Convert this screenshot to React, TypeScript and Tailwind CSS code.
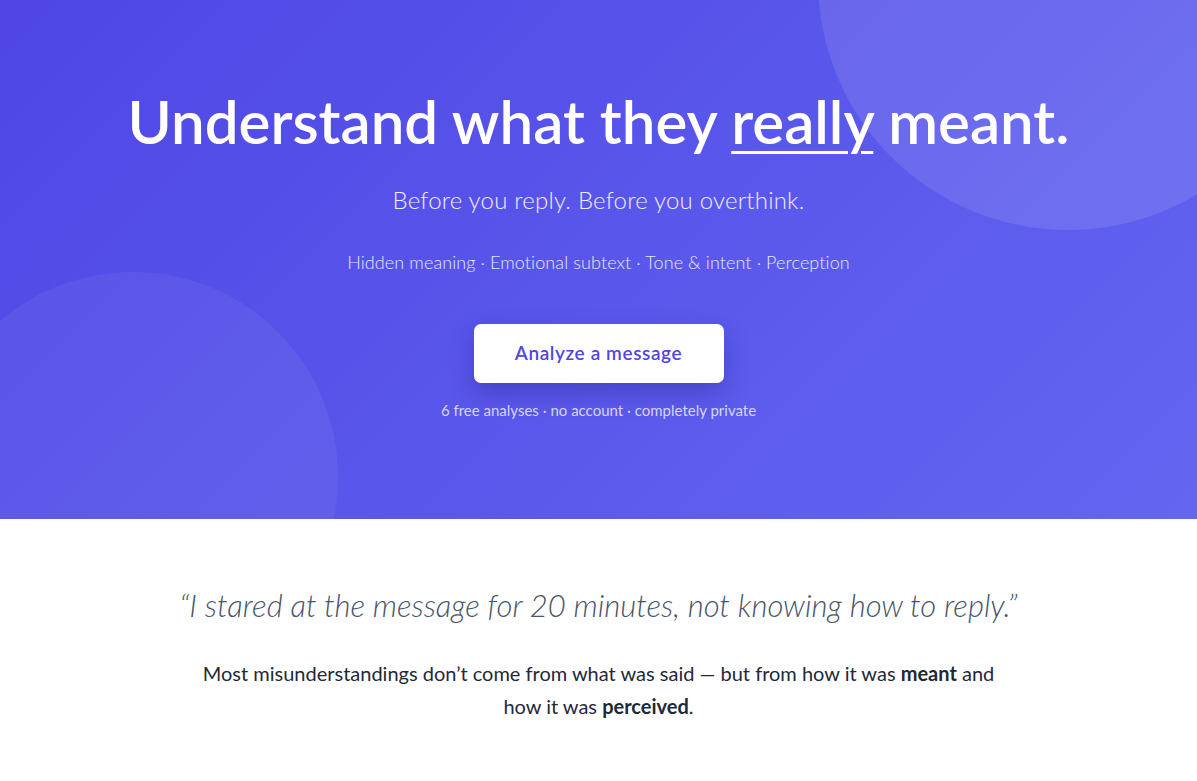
import React from "react";

export default function App() {
  return (
    <div className="min-h-screen bg-white" style={{ fontFamily: '"Lato", "Open Sans", sans-serif' }}>
      <section className="relative h-[519px] overflow-hidden bg-[linear-gradient(135deg,#4f46e5_0%,#6366f1_100%)] text-white">
        <div className="pointer-events-none absolute left-[818px] top-[-270px] h-[500px] w-[500px] rounded-full bg-white/10" />
        <div className="pointer-events-none absolute left-[-72px] top-[272px] h-[410px] w-[410px] rounded-full bg-white/5" />
        <div className="relative flex flex-col items-center pt-[85px] text-center">
          <h1 className="text-[60px] font-semibold leading-[72px]">
            Understand what they <span className="underline decoration-[3px] underline-offset-[7px]">really</span> meant.
          </h1>
          <p className="mt-[25px] text-[24px] leading-[36px] font-light tracking-[0.2px] text-white/90">Before you reply. Before you overthink.</p>
          <p className="mt-[31px] text-[18px] leading-[27px] font-light tracking-[0.1px] text-white/85">Hidden meaning · Emotional subtext · Tone &amp; intent · Perception</p>
          <button className="mt-[48px] h-[59px] w-[250px] rounded-[7px] bg-white text-[19px] font-semibold tracking-[0.6px] text-[#4f46e5] shadow-[0_10px_25px_rgba(30,20,120,0.3)]">
            Analyze a message
          </button>
          <p className="mt-[16px] text-[15px] leading-[22px] font-normal text-white/75">6 free analyses · no account · completely private</p>
        </div>
      </section>
      <section className="flex flex-col items-center px-6 pt-[63px] text-center">
        <p className="text-[31px] leading-[46px] font-light italic text-[#475569]">“I stared at the message for 20 minutes, not knowing how to reply.”</p>
        <p className="mt-[29px] max-w-[800px] text-[20px] leading-[33px] font-normal text-[#1f2937]">
          Most misunderstandings don’t come from what was said — but from how it was <strong className="font-bold">meant</strong> and how it was <strong className="font-bold">perceived</strong>.
        </p>
      </section>
    </div>
  );
}
